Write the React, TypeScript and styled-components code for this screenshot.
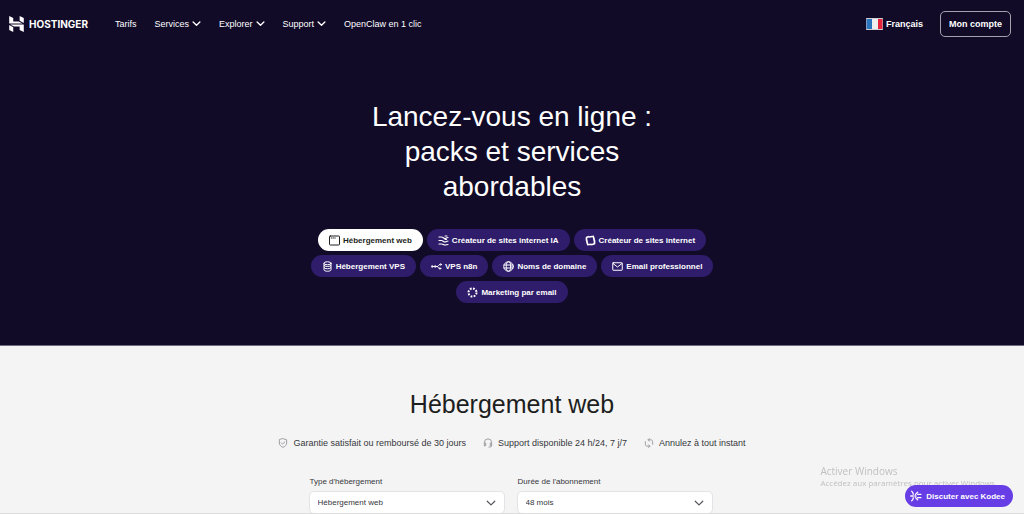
import React from "react";
import styled, { createGlobalStyle, css } from "styled-components";

const Global = createGlobalStyle`
  *, *::before, *::after { box-sizing: border-box; }
  html, body { margin: 0; background: #f4f4f4; }
  body { font-family: "Liberation Sans", Arial, sans-serif; color: #1d1e20; }
  button, select { font-family: inherit; cursor: pointer; }
  h1, h2, p, ul { margin: 0; padding: 0; }
`;

const Page = styled.div`
  min-height: 100vh;
  display: flex;
  flex-direction: column;
`;

const Hero = styled.div`
  background: #110b28;
  color: #fff;
  padding-bottom: 42px;
  border-bottom: 1px solid #6f6b80;
`;

const Header = styled.header`
  display: flex;
  align-items: center;
  height: 47px;
  padding: 0 13px 0 9px;
`;

const Logo = styled.a`
  display: flex;
  align-items: center;
  gap: 5px;
  width: 106px;
  color: #fff;
  font-family: Inter, sans-serif;
  font-size: 10px;
  font-weight: 700;
  text-decoration: none;
`;

const Nav = styled.nav`
  display: flex;
  align-items: center;
  gap: 18px;
  flex: 1;
`;

const navText = css`
  display: inline-flex;
  align-items: center;
  gap: 3px;
  padding: 0;
  border: 0;
  background: none;
  color: #fff;
  font-size: 9px;
  line-height: 12px;
  white-space: nowrap;
  text-decoration: none;
`;

const NavLink = styled.a`
  ${navText}
`;

const NavButton = styled.button`
  ${navText}
`;

const Language = styled.button`
  ${navText}
  font-weight: 700;
  margin-right: 17px;
`;

const Account = styled.button`
  height: 26px;
  padding: 0 8px;
  border: 1px solid #a5a2b0;
  border-radius: 5px;
  background: transparent;
  color: #fff;
  font-size: 9px;
  font-weight: 700;
`;

const Title = styled.h1`
  max-width: 320px;
  margin: 52px auto 25px;
  font-size: 28px;
  line-height: 35px;
  font-weight: 400;
  text-align: center;
`;

const Pills = styled.div`
  display: flex;
  flex-wrap: wrap;
  justify-content: center;
  gap: 4px;
  max-width: 420px;
  margin: 0 auto;
`;

const Pill = styled.button<{ $active?: boolean }>`
  display: inline-flex;
  align-items: center;
  gap: 3px;
  height: 22px;
  padding: 0 11px;
  border: 0;
  border-radius: 11px;
  background: ${(p) => (p.$active ? "#fff" : "#2f1c6a")};
  color: ${(p) => (p.$active ? "#1d1e20" : "#fff")};
  font-size: 8px;
  font-weight: 700;
  white-space: nowrap;
`;

const Plans = styled.main`
  display: flex;
  flex-direction: column;
  align-items: center;
  padding-top: 42px;
`;

const Heading = styled.h2`
  font-size: 25px;
  line-height: 32px;
  font-weight: 400;
`;

const Features = styled.ul`
  display: flex;
  gap: 17px;
  margin-top: 16px;
  list-style: none;
`;

const Feature = styled.li`
  display: flex;
  align-items: center;
  gap: 5px;
  font-size: 9px;
  line-height: 14px;
  color: #36373c;
  white-space: nowrap;
  svg { color: #96979c; }
`;

const Filters = styled.form`
  display: grid;
  grid-template-columns: 1fr 1fr;
  gap: 12px;
  width: 100%;
  max-width: 404px;
  margin-top: 26px;
  margin-right: 3px;
`;

const Field = styled.div`
  display: flex;
  flex-direction: column;
  gap: 3px;
`;

const FieldLabel = styled.label`
  padding-left: 1px;
  font-size: 8px;
  line-height: 12px;
  color: #36373c;
`;

const SelectBox = styled.div`
  display: grid;
  align-items: center;
  > * { grid-area: 1 / 1; }
  > svg { justify-self: end; margin-right: 9px; color: #55565c; pointer-events: none; }
`;

const Select = styled.select`
  appearance: none;
  width: 100%;
  height: 23px;
  padding: 0 24px 0 8px;
  border: 1px solid #e2e3e6;
  border-radius: 5px;
  background: #fff;
  color: #36373c;
  font-size: 8px;
`;

const BottomEdge = styled.div`
  position: fixed;
  inset: auto 0 0 0;
  height: 1px;
  background: #dcdcdc;
`;

const Watermark = styled.aside`
  position: fixed;
  right: 27px;
  bottom: 26px;
  color: #c0c0c0;
  font-family: "Open Sans", "Noto Sans", sans-serif;
  font-size: 8px;
  line-height: 10px;
  white-space: nowrap;
`;

const WatermarkTitle = styled.p`
  font-size: 10px;
  line-height: 14px;
`;

const Chat = styled.button`
  position: fixed;
  right: 11px;
  bottom: 7px;
  display: flex;
  align-items: center;
  gap: 4px;
  height: 22px;
  padding: 0 8px 0 5px;
  border: 0;
  border-radius: 11px;
  background: #673de6;
  color: #fff;
  font-size: 8px;
  font-weight: 700;
  white-space: nowrap;
`;

const Chevron = ({ size = 9, weight = 1.2 }: { size?: number; weight?: number }) => (
  <svg width={size} height={size} viewBox="0 0 8 8" fill="none" stroke="currentColor" strokeWidth={weight} strokeLinecap="round" strokeLinejoin="round" aria-hidden="true">
    <path d="M1 2.600 4 5.500 7 2.600" />
  </svg>
);

const Icon = ({ children, size = 11 }: { children: React.ReactNode; size?: number }) => (
  <svg width={size} height={size} viewBox="0 0 22 22" fill="none" stroke="currentColor" strokeWidth="2" strokeLinecap="round" strokeLinejoin="round" aria-hidden="true">
    {children}
  </svg>
);

const products: { label: string; icon: React.ReactNode }[] = [
  {
    label: "Hébergement web",
    icon: <Icon><rect x="1" y="2" width="20" height="18" rx="1.5" /><path d="M4.500 6h1M8 6h1M11.500 6h1" /></Icon>,
  },
  {
    label: "Créateur de sites internet IA",
    icon: <Icon><path strokeWidth="2.400" d="M2 4h5c3 0 4 3 7 3s3-2 6-2M2 11h5c3 0 4 3 7 3s3-2 6-2M2 18h5c3 0 4 2 7 2s3-1 6-1M14 2h4M14 9h3" /></Icon>,
  },
  {
    label: "Créateur de sites internet",
    icon: <Icon><path strokeWidth="3.400" strokeLinecap="butt" d="M8 3 3 5v6M3 9l2 9M4 19.500l9-1M13 19.500l6-2v-7M19 13l-2-9M18 2.500 8 4" /></Icon>,
  },
  {
    label: "Hébergement VPS",
    icon: <Icon><ellipse cx="11" cy="4.500" rx="7" ry="3" /><path d="M4 4.500v13c0 4 14 4 14 0v-13M4 9c1 3 13 3 14 0M4 13.500c1 3 13 3 14 0" /></Icon>,
  },
  {
    label: "VPS n8n",
    icon: <Icon><circle cx="2.500" cy="11" r="1.700" /><circle cx="8.500" cy="11" r="1.700" /><path d="M4 11h3M10 11h3c2 0 1-4 5-4M13 11c2 0 1 4 4 4" /><circle cx="19.500" cy="7" r="1.500" /><circle cx="18" cy="15" r="1.500" /></Icon>,
  },
  {
    label: "Noms de domaine",
    icon: <Icon><circle cx="11" cy="11" r="9.500" /><ellipse cx="11" cy="11" rx="4.500" ry="9.500" /><path d="M2 8h18M2 14h18" /></Icon>,
  },
  {
    label: "Email professionnel",
    icon: <Icon><rect x="1.500" y="3.500" width="19" height="15" rx="1" /><path d="m2 5 9 7 9-7" /></Icon>,
  },
  {
    label: "Marketing par email",
    icon: <Icon><circle cx="11" cy="11" r="8" strokeWidth="4" strokeLinecap="butt" strokeDasharray="3.600 2.683" /></Icon>,
  },
];

const HostingerMark = () => (
  <svg width="15" height="16" viewBox="1.5 0 21 24" preserveAspectRatio="none" fill="currentColor" aria-hidden="true">
    <path d="M16.415 0v7.160l5.785 3.384V2.949L16.415 0ZM1.800 0v11.237h18.815L14.890 8.090l-7.457-.003V3.024L1.800 0ZM16.415 20.894v-5.019l-7.514-.005c.007.033-5.820-3.197-5.820-3.197l19.119.091V24l-5.785-3.106ZM1.800 13.551v7.343l5.633 2.949v-6.988L1.800 13.551Z" />
  </svg>
);

const FrenchFlag = () => (
  <svg width="17" height="12" viewBox="0 0 17 12" aria-hidden="true">
    <rect width="17" height="12" rx="1" fill="#f0f0f0" />
    <path d="M0 1h6v10H0z" fill="#2a74bd" />
    <path d="M12 1h5v10h-5z" fill="#e5263a" />
    <rect x=".5" y=".5" width="16" height="11" rx="1" fill="none" stroke="#b9b7c2" strokeWidth=".6" />
  </svg>
);

export default function App() {
  return (
    <Page>
      <Global />
      <Hero>
        <Header>
          <Logo href="#"><HostingerMark />HOSTINGER</Logo>
          <Nav>
            <NavLink href="#tarifs">Tarifs</NavLink>
            {["Services", "Explorer", "Support"].map((item) => (
              <NavButton key={item} type="button">{item}<Chevron /></NavButton>
            ))}
            <NavLink href="#openclaw">OpenClaw en 1 clic</NavLink>
          </Nav>
          <Language type="button"><FrenchFlag />Français</Language>
          <Account type="button">Mon compte</Account>
        </Header>
        <Title>Lancez-vous en ligne : packs et services abordables</Title>
        <Pills>
          {products.map((product, index) => (
            <Pill key={product.label} type="button" $active={index === 0}>
              {product.icon}{product.label}
            </Pill>
          ))}
        </Pills>
      </Hero>

      <Plans>
        <Heading>Hébergement web</Heading>
        <Features>
          <Feature>
            <Icon size={10}><path d="M11 1.500 19 4v7c0 5-4 8-8 9.500C7 19 3 16 3 11V4ZM7 10.500l3 3 5-5" /></Icon>
            Garantie satisfait ou remboursé de 30 jours
          </Feature>
          <Feature>
            <Icon size={10}><path d="M3 17v-7a8 8 0 0 1 16 0v7c0 2-2 3-6 3M3 11h3v6H3M19 11h-3v6h3" /></Icon>
            Support disponible 24 h/24, 7 j/7
          </Feature>
          <Feature>
            <Icon size={10}><path d="M9 4h6c3 0 4 2 4 5v5M13 18H7c-3 0-4-2-4-5V8M12 1 9 4l3 3M10 15l3 3-3 3" /></Icon>
            Annulez à tout instant
          </Feature>
        </Features>
        <Filters>
          <Field>
            <FieldLabel htmlFor="hosting-type">Type d'hébergement</FieldLabel>
            <SelectBox>
              <Select id="hosting-type"><option>Hébergement web</option></Select>
              <Chevron size={10} weight={1} />
            </SelectBox>
          </Field>
          <Field>
            <FieldLabel htmlFor="duration">Durée de l'abonnement</FieldLabel>
            <SelectBox>
              <Select id="duration"><option>48 mois</option></Select>
              <Chevron size={10} weight={1} />
            </SelectBox>
          </Field>
        </Filters>
      </Plans>

      <Watermark>
        <WatermarkTitle>Activer Windows</WatermarkTitle>
        <p>Accédez aux paramètres pour activer Windows.</p>
      </Watermark>
      <Chat type="button">
        <Icon size={12}><path strokeWidth="2.400" d="M3 2c2 2 3 4 3 6M3 20c2-2 3-4 3-6M1.500 11H6M10 8l4-4M9 11h2M10 14l4 4M14 8h6M14 14h6" /></Icon>
        Discuter avec Kodee
      </Chat>
      <BottomEdge />
    </Page>
  );
}
